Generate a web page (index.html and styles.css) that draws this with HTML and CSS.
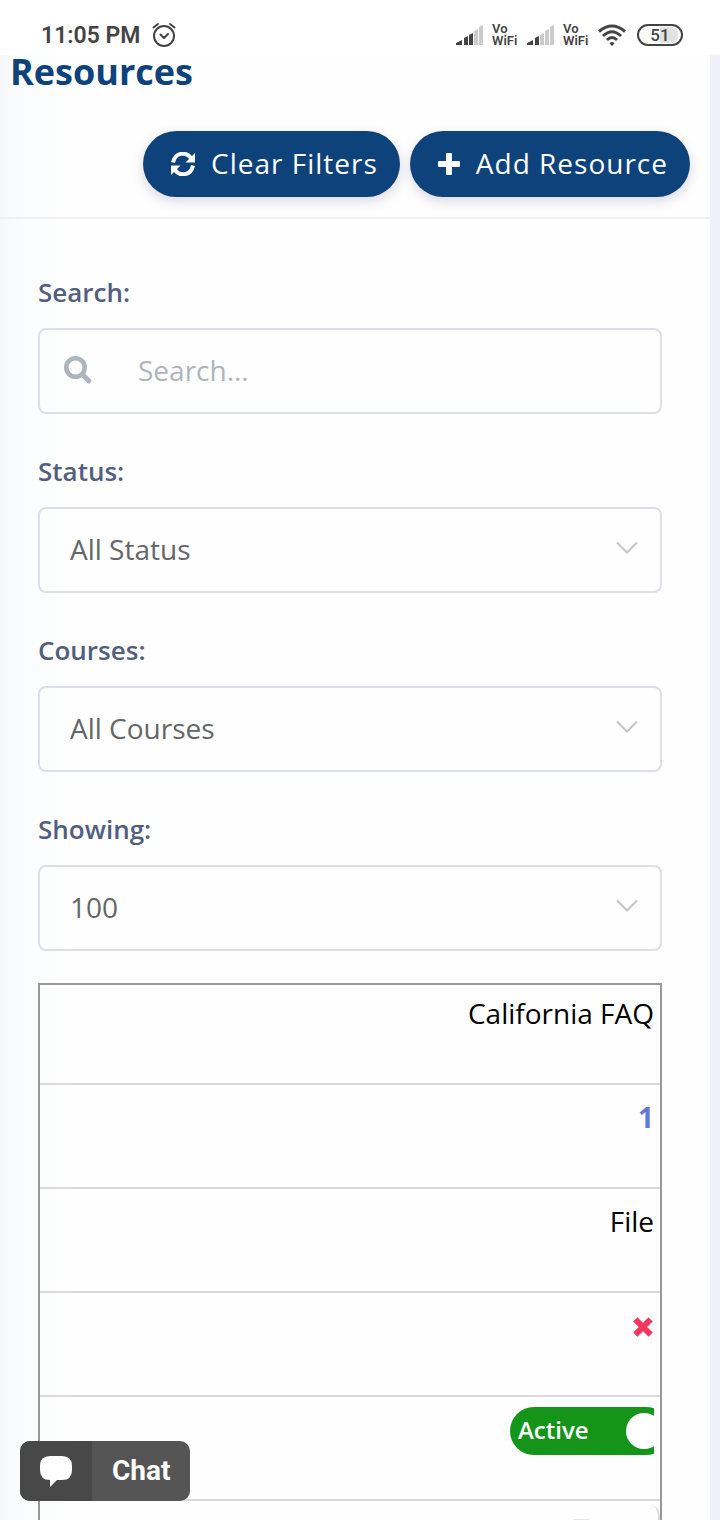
FILE: index.html
```html
<!DOCTYPE html>
<html lang="en">
<head>
<meta charset="utf-8">
<meta name="viewport" content="width=device-width, initial-scale=1">
<title>Resources</title>
<link rel="stylesheet" href="styles.css">
</head>
<body>
<div class="screen">
  <div class="statusbar">
    <span class="clock">11:05 PM</span>
    <svg class="alarm" width="24" height="26" viewBox="0 0 24 26" fill="none" stroke="#444" stroke-width="2" stroke-linecap="round" stroke-linejoin="round"><circle cx="12" cy="14" r="10"/><path d="M1.500 5.500 6 2M22.500 5.500 18 2M8.500 12.500l3.500 3.500 4-4"/></svg>
    <div class="indicators">
      <svg width="28" height="20" viewBox="0 0 28 20"><path fill="#444" d="M0 20v-2l6-3v5zM8 20v-7l4-2v9zM13 20V10l4-2v12z"/><path fill="#cbcbcb" d="M18 20V6l4-2v16zM23 20V2l4-2v20z"/></svg>
      <span class="vo"><span>Vo</span><span>WiFi</span></span>
      <svg width="28" height="20" viewBox="0 0 28 20"><path fill="#444" d="M0 20v-2l6-3v5zM8 20v-7l4-2v9z"/><path fill="#cbcbcb" d="M13 20V10l4-2v12zM18 20V6l4-2v16zM23 20V2l4-2v20z"/></svg>
      <span class="vo"><span>Vo</span><span>WiFi</span></span>
      <svg class="wifi" width="28" height="22" viewBox="0 0 28 22" fill="none" stroke="#444" stroke-width="3"><path d="M1 7.500Q14-3.500 27 7.500M5 12Q14 3.500 23 12M9 16Q14 11 19 16"/><path fill="#444" stroke="none" d="M11.500 19.200q2.500-2.400 5 0L14 22z"/></svg>
      <span class="battery">51</span>
    </div>
  </div>

  <main class="page">
    <header class="head">
      <h1>Resources</h1>
      <div class="actions">
        <button class="btn" type="button"><svg width="24" height="24" viewBox="0 0 24 24"><path fill="none" stroke="#fff" stroke-width="4" d="M2 10.500C4 .5 15-1 20 6M22 13.500C20 23.500 9 25 4 18"/><path fill="#fff" d="M24 1v9.500h-9.500zM0 23v-9.500h9.500z"/></svg><span>Clear Filters</span></button>
        <button class="btn" type="button"><svg width="22" height="22" viewBox="0 0 22 22"><path fill="#fff" d="M9 0h4q1 0 1 1v7h7q1 0 1 1v4q0 1-1 1h-7v7q0 1-1 1H9q-1 0-1-1v-7H1q-1 0-1-1V9q0-1 1-1h7V1q0-1 1-1z"/></svg><span>Add Resource</span></button>
      </div>
    </header>

    <div class="content">
      <form class="filters">
        <div class="field">
          <label for="search">Search:</label>
          <div class="control">
            <svg class="search-icon" width="30" height="30" viewBox="0 0 30 30" fill="none" stroke="#aeb5bc"><circle cx="11.500" cy="11.500" r="9.200" stroke-width="4.600"/><path d="M18 18l7.500 7.500" stroke-width="5"/><path d="M24 25l1 1 1-1-1-1z" stroke-width="3" stroke-linejoin="round"/></svg>
            <input id="search" type="text" placeholder="Search...">
          </div>
        </div>
        <div class="field">
          <label for="status">Status:</label>
          <div class="control">
            <select id="status"><option>All Status</option></select>
            <svg class="chevron" width="22" height="14" viewBox="0 0 22 14" fill="none" stroke="#c3c5cd" stroke-width="2"><path d="M1 1.500l10 10 10-10"/></svg>
          </div>
        </div>
        <div class="field">
          <label for="courses">Courses:</label>
          <div class="control">
            <select id="courses"><option>All Courses</option></select>
            <svg class="chevron" width="22" height="14" viewBox="0 0 22 14" fill="none" stroke="#c3c5cd" stroke-width="2"><path d="M1 1.500l10 10 10-10"/></svg>
          </div>
        </div>
        <div class="field">
          <label for="showing">Showing:</label>
          <div class="control">
            <select id="showing"><option>100</option></select>
            <svg class="chevron" width="22" height="14" viewBox="0 0 22 14" fill="none" stroke="#c3c5cd" stroke-width="2"><path d="M1 1.500l10 10 10-10"/></svg>
          </div>
        </div>
      </form>

      <table class="resources">
        <tbody>
          <tr><td>California FAQ</td></tr>
          <tr><td><a class="count" href="#">1</a></td></tr>
          <tr><td>File</td></tr>
          <tr><td class="cross-cell"><svg class="cross" role="img" aria-label="No" width="20" height="20" viewBox="0 0 20 20" stroke="#f4365f" stroke-width="6" stroke-linecap="square"><path d="M4.500 4.500l11 11M15.500 4.500l-11 11"/></svg></td></tr>
          <tr><td class="toggle-cell"><div class="clip"><label class="toggle"><span>Active</span><input type="checkbox" checked></label></div></td></tr>
          <tr><td class="tools-cell"><div class="tools"><svg width="18" height="20" viewBox="0 0 18 20"><path fill="#e4e8ea" d="M1 0h16v20H1z"/></svg></div></td></tr>
        </tbody>
      </table>
    </div>
  </main>

  <button class="chat" type="button">
    <span class="chat-icon"><svg width="32" height="32" viewBox="0 0 32 32"><path fill="#fff" d="M10 1h12q10 0 10 10v4q0 10-10 10h-5l-7 7v-7Q0 25 0 15v-4Q0 1 10 1z"/></svg></span>
    <span class="chat-label">Chat</span>
  </button>
</div>
</body>
</html>
```
FILE: styles.css
```css
* { box-sizing: border-box; }

body {
  margin: 0;
  background: #fff;
  color: #000;
  font-family: "Open Sans", "Noto Sans", sans-serif;
  font-size: 28px;
}

button, input, select { font: inherit; color: inherit; }

.screen {
  position: relative;
  display: flex;
  flex-direction: column;
  height: 100vh;
  overflow: hidden;
}

.statusbar {
  display: flex;
  align-items: center;
  flex: none;
  padding: 14px 37px 0 41px;
  height: 55px;
  color: #444;
  font-family: Roboto, sans-serif;
}
.clock { padding-top: 2px; font-size: 23px; font-weight: 600; }
.alarm { margin-left: 12px; }
.indicators {
  display: flex;
  align-items: center;
  gap: 8px;
  margin-left: auto;
}
.vo {
  display: flex;
  flex-direction: column;
  width: 27px;
  font-size: 13px;
  font-weight: 600;
  line-height: 12px;
}
.wifi { margin-right: 3px; }
.battery {
  width: 46px;
  border: 2px solid #444;
  border-radius: 11px;
  background: linear-gradient(90deg, #fff 50%, #e2e2e2 50%) content-box;
  padding: 1px 3px;
  font-size: 17px;
  font-weight: 500;
  line-height: 16px;
  text-align: center;
}

.page {
  flex: 1;
  min-height: 0;
  border-right: 10px solid #eff0f8;
  background: linear-gradient(90deg, #f6f8fb 0, #fbfcfd 20px, #fefefe 70px, #fefefe 100%);
}
.head {
  padding: 0 20px 20px 10px;
  border-bottom: 2px solid #f0f0f2;
}
h1 {
  margin: 0;
  color: #0e427a;
  font-size: 36px;
  line-height: 34px;
}
.actions {
  display: flex;
  justify-content: flex-end;
  gap: 10px;
  margin-top: 42px;
}
.btn {
  display: flex;
  align-items: center;
  gap: 16px;
  height: 66px;
  padding: 0 22px 0 28px;
  border: 0;
  border-radius: 33px;
  background: #0e427a;
  box-shadow: 0 4px 12px rgba(60, 60, 110, .2);
  color: #fff;
  font-weight: 500;
  letter-spacing: 1px;
}
.btn span { padding-bottom: 2px; }

.content { padding: 55px 48px 0 38px; }
.filters { display: grid; gap: 39px; }
.field label {
  display: block;
  margin-bottom: 18px;
  color: #525e80;
  font-size: 26px;
  font-weight: 600;
  line-height: 36px;
}
.control { position: relative; }
.control input, .control select {
  display: block;
  width: 100%;
  height: 86px;
  border: 2px solid #dcdfe5;
  border-radius: 8px;
  outline: 0;
  background: transparent;
  appearance: none;
}
.control input { padding: 0 20px 2px 98px; }
.control input::placeholder { color: #aeb5bc; opacity: 1; }
.control select { padding: 0 60px 2px 30px; color: #646669; }
.search-icon { position: absolute; top: 28px; left: 26px; }
.chevron { position: absolute; top: 34px; right: 24px; pointer-events: none; }

.resources {
  width: 100%;
  margin-top: 32px;
  border: 2px solid #999;
  border-spacing: 0;
}
.resources td {
  height: 104px;
  padding: 13px 6px 0;
  border-bottom: 2px solid #dadada;
  line-height: 38px;
  text-align: right;
  vertical-align: top;
}
.resources tr:first-child td { height: 100px; padding-top: 9px; }
.count { color: #6277d8; font-weight: 700; text-decoration: none; }
.resources .cross-cell { padding: 24px 7px 0; line-height: 20px; }
.cross { display: block; margin-left: auto; border-radius: 3px; }
.resources .toggle-cell { padding: 10px 6px 0; }
.clip { overflow: hidden; width: 144px; margin-left: auto; }
.toggle {
  display: flex;
  align-items: center;
  justify-content: space-between;
  width: 160px;
  height: 48px;
  padding: 0 8px;
  border-radius: 24px;
  background: #14951a;
  color: #fff;
  font-size: 24px;
  font-weight: 600;
}
.toggle span { padding-bottom: 2px; }
.toggle input {
  width: 36px;
  height: 36px;
  margin: 0;
  border-radius: 50%;
  background: #fff;
  appearance: none;
}
.resources .tools-cell { padding: 4px 0 0; }
.tools {
  width: 160px;
  height: 70px;
  margin-left: auto;
  padding: 14px 0 0 72px;
  border-right: 2px solid #dadddd;
  border-radius: 10px;
  line-height: 0;
  text-align: left;
}

.chat {
  position: absolute;
  bottom: 19px;
  left: 20px;
  display: flex;
  overflow: hidden;
  height: 60px;
  padding: 0;
  border: 0;
  border-radius: 10px;
  background: #555;
  color: #fff;
  font-family: Roboto, sans-serif;
  font-weight: 700;
}
.chat-icon {
  display: flex;
  align-items: center;
  justify-content: center;
  width: 72px;
  height: 60px;
  background: #484848;
}
.chat-label { padding: 0 20px; line-height: 60px; }
```
